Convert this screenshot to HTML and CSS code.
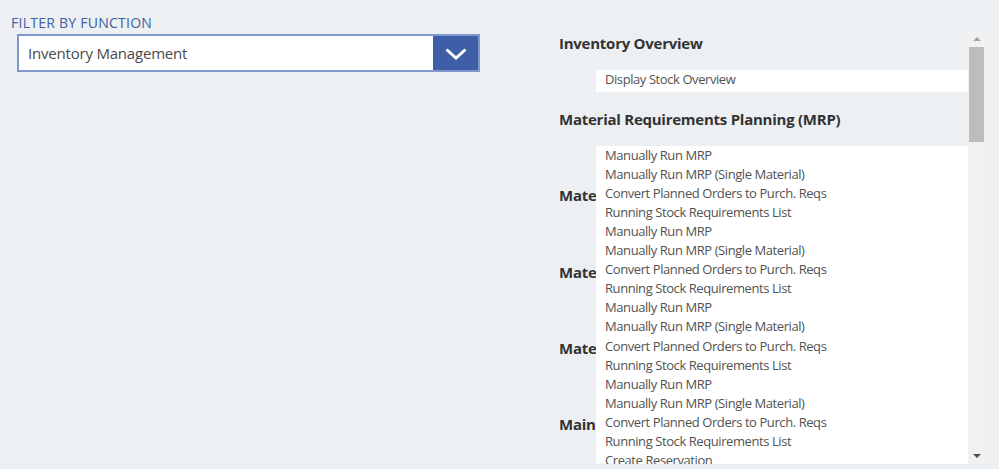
FILE: index.html
```html
<!DOCTYPE html>
<html lang="en">
<head>
<meta charset="utf-8">
<title>Filter by function</title>
<link rel="stylesheet" href="styles.css">
</head>
<body>
<div class="page">
  <div class="filter">
    <div class="filter-label">FILTER BY FUNCTION</div>
    <div class="select">
      <div class="select-value">Inventory Management</div>
      <div class="select-button">
        <svg width="22" height="12" viewBox="0 0 22 12"><path d="M1.5 1.5 L11 10 L20.5 1.5" fill="none" stroke="#fff" stroke-width="3" stroke-linecap="butt" stroke-linejoin="miter"/></svg>
      </div>
    </div>
  </div>
  <div class="panel">
    <div class="panel-content">
      <section class="group">
        <h2 class="group-title">Inventory Overview</h2>
        <ul class="group-list">
          <li>Display Stock Overview</li>
        </ul>
      </section>
      <section class="group">
        <h2 class="group-title">Material Requirements Planning (MRP)</h2>
        <ul class="group-list">
          <li>Manually Run MRP</li>
          <li>Manually Run MRP (Single Material)</li>
          <li>Convert Planned Orders to Purch. Reqs</li>
          <li>Running Stock Requirements List</li>
          <li>Manually Run MRP</li>
          <li>Manually Run MRP (Single Material)</li>
          <li>Convert Planned Orders to Purch. Reqs</li>
          <li>Running Stock Requirements List</li>
          <li>Manually Run MRP</li>
          <li>Manually Run MRP (Single Material)</li>
          <li>Convert Planned Orders to Purch. Reqs</li>
          <li>Running Stock Requirements List</li>
          <li>Manually Run MRP</li>
          <li>Manually Run MRP (Single Material)</li>
          <li>Convert Planned Orders to Purch. Reqs</li>
          <li>Running Stock Requirements List</li>
          <li>Create Reservation</li>
          <li>Change Reservation</li>
          <li>Display Reservation</li>
        </ul>
      </section>
      <section class="group">
        <h2 class="group-title">Material Movements</h2>
      </section>
      <section class="group">
        <h2 class="group-title">Material Documents</h2>
      </section>
      <section class="group">
        <h2 class="group-title">Material Valuation</h2>
      </section>
      <section class="group">
        <h2 class="group-title">Maintenance</h2>
      </section>
    </div>
    <div class="scrollbar">
      <div class="sb-arrow sb-up"></div>
      <div class="sb-track"><div class="sb-thumb"></div></div>
      <div class="sb-arrow sb-down"></div>
    </div>
  </div>
</div>
</body>
</html>
```

FILE: styles.css
```css
* { box-sizing: border-box; }
html, body { margin: 0; padding: 0; }
body {
  background: #edf0f3;
  font-family: "Open Sans", "Liberation Sans", sans-serif;
  width: 999px;
  height: 469px;
  overflow: hidden;
}
.page {
  display: flex;
  justify-content: space-between;
  padding: 0 14px 0 11px;
  height: 469px;
}
.filter {
  padding-top: 13px;
  width: 470px;
}
.filter-label {
  font-size: 14px;
  line-height: 19px;
  color: #40609f;
  letter-spacing: 0.25px;
}
.select {
  margin: 2px 0 0 6px;
  width: 463px;
  height: 38px;
  border: 2px solid #8197cc;
  background: #fff;
  display: flex;
}
.select-value {
  flex: 1;
  font-size: 15px;
  line-height: 34px;
  letter-spacing: -0.2px;
  color: #4a4a4a;
  padding-left: 9px;
}
.select-button {
  width: 45px;
  background: #3e5ea8;
  display: flex;
  align-items: center;
  justify-content: center;
}
.select-button svg { display: block; margin-top: 1px; }
.panel {
  margin-top: 31px;
  width: 437px;
  height: 433px;
  display: flex;
}
.panel-content {
  flex: 1;
  overflow: hidden;
  padding: 1.5px 0 0 11px;
}
.group {
  height: 76.4px;
}
.group-title {
  margin: 0;
  font-size: 15px;
  line-height: 20px;
  font-weight: 700;
  letter-spacing: -0.25px;
  color: #333;
}
.group-list {
  position: relative;
  z-index: 1;
  list-style: none;
  margin: 17px 0 0 37px;
  padding: 0 9px 3px;
  background: #fff;
  font-size: 13px;
  line-height: 19.07px;
  letter-spacing: -0.42px;
  color: #525252;
}
.scrollbar {
  width: 17px;
  background: #f1f1f1;
  display: flex;
  flex-direction: column;
}
.sb-arrow {
  height: 16px;
  display: flex;
  align-items: center;
  justify-content: center;
}
.sb-up::before {
  content: "";
  border-left: 4px solid transparent;
  border-right: 4px solid transparent;
  border-bottom: 4px solid #a3a3a3;
}
.sb-down::before {
  content: "";
  border-left: 4px solid transparent;
  border-right: 4px solid transparent;
  border-top: 4px solid #505050;
}
.sb-track {
  flex: 1;
}
.sb-thumb {
  margin: 0 1px 0 1px;
  height: 95px;
  background: #bdbdbd;
}
```
